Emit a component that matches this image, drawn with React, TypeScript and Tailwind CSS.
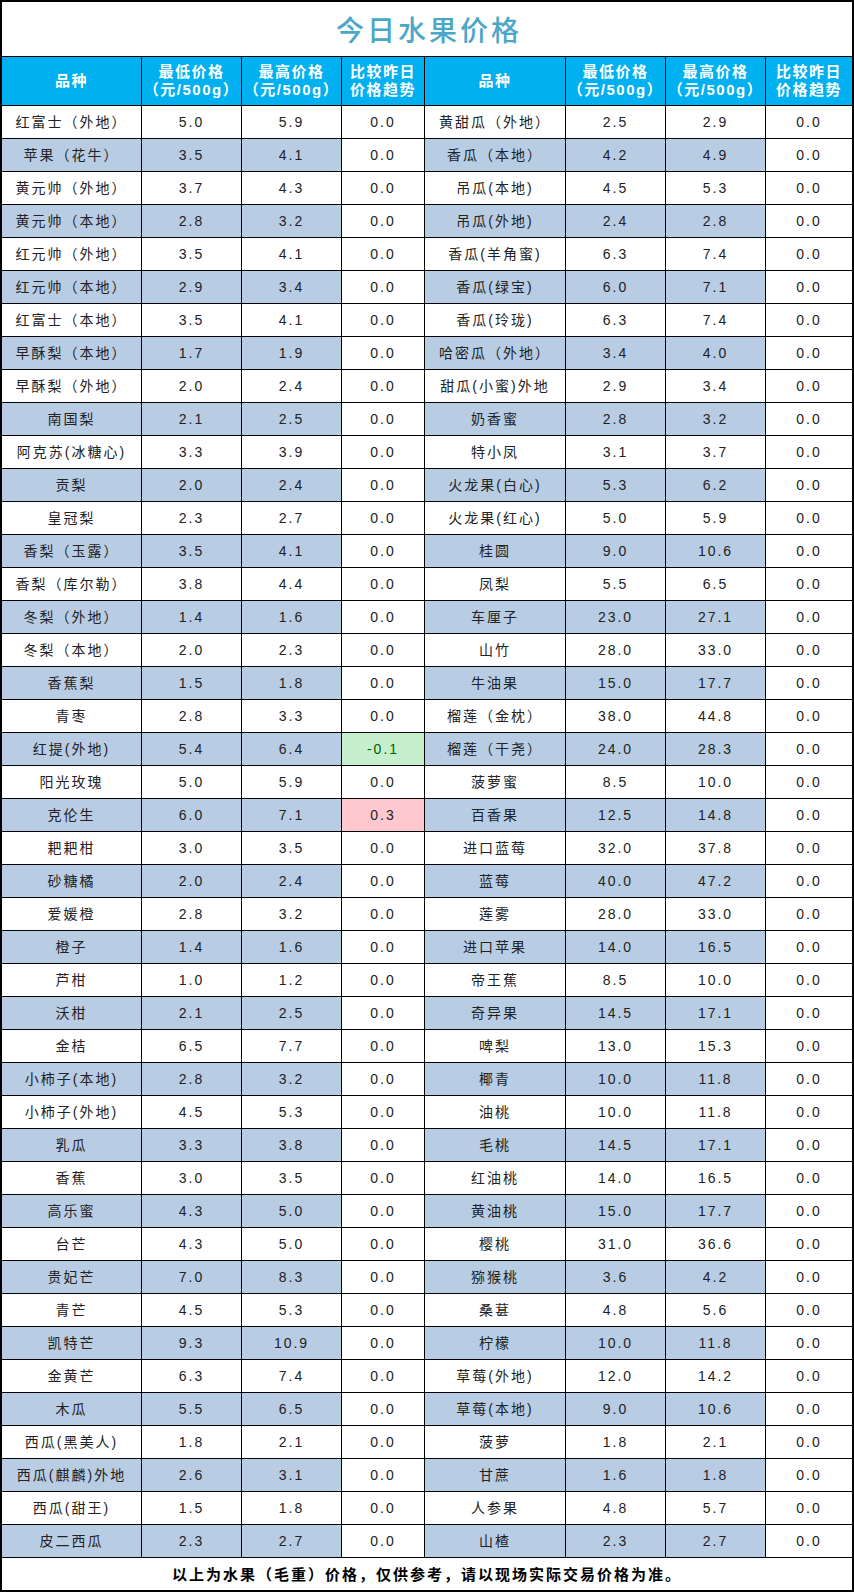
import React from "react";

type Row = [string, string, string, string];

const left: Row[] = [
  ["红富士（外地）", "5.0", "5.9", "0.0"],
  ["苹果（花牛）", "3.5", "4.1", "0.0"],
  ["黄元帅（外地）", "3.7", "4.3", "0.0"],
  ["黄元帅（本地）", "2.8", "3.2", "0.0"],
  ["红元帅（外地）", "3.5", "4.1", "0.0"],
  ["红元帅（本地）", "2.9", "3.4", "0.0"],
  ["红富士（本地）", "3.5", "4.1", "0.0"],
  ["早酥梨（本地）", "1.7", "1.9", "0.0"],
  ["早酥梨（外地）", "2.0", "2.4", "0.0"],
  ["南国梨", "2.1", "2.5", "0.0"],
  ["阿克苏(冰糖心)", "3.3", "3.9", "0.0"],
  ["贡梨", "2.0", "2.4", "0.0"],
  ["皇冠梨", "2.3", "2.7", "0.0"],
  ["香梨（玉露）", "3.5", "4.1", "0.0"],
  ["香梨（库尔勒）", "3.8", "4.4", "0.0"],
  ["冬梨（外地）", "1.4", "1.6", "0.0"],
  ["冬梨（本地）", "2.0", "2.3", "0.0"],
  ["香蕉梨", "1.5", "1.8", "0.0"],
  ["青枣", "2.8", "3.3", "0.0"],
  ["红提(外地)", "5.4", "6.4", "-0.1"],
  ["阳光玫瑰", "5.0", "5.9", "0.0"],
  ["克伦生", "6.0", "7.1", "0.3"],
  ["耙耙柑", "3.0", "3.5", "0.0"],
  ["砂糖橘", "2.0", "2.4", "0.0"],
  ["爱媛橙", "2.8", "3.2", "0.0"],
  ["橙子", "1.4", "1.6", "0.0"],
  ["芦柑", "1.0", "1.2", "0.0"],
  ["沃柑", "2.1", "2.5", "0.0"],
  ["金桔", "6.5", "7.7", "0.0"],
  ["小柿子(本地)", "2.8", "3.2", "0.0"],
  ["小柿子(外地)", "4.5", "5.3", "0.0"],
  ["乳瓜", "3.3", "3.8", "0.0"],
  ["香蕉", "3.0", "3.5", "0.0"],
  ["高乐蜜", "4.3", "5.0", "0.0"],
  ["台芒", "4.3", "5.0", "0.0"],
  ["贵妃芒", "7.0", "8.3", "0.0"],
  ["青芒", "4.5", "5.3", "0.0"],
  ["凯特芒", "9.3", "10.9", "0.0"],
  ["金黄芒", "6.3", "7.4", "0.0"],
  ["木瓜", "5.5", "6.5", "0.0"],
  ["西瓜(黑美人)", "1.8", "2.1", "0.0"],
  ["西瓜(麒麟)外地", "2.6", "3.1", "0.0"],
  ["西瓜(甜王)", "1.5", "1.8", "0.0"],
  ["皮二西瓜", "2.3", "2.7", "0.0"],
];

const right: Row[] = [
  ["黄甜瓜（外地）", "2.5", "2.9", "0.0"],
  ["香瓜（本地）", "4.2", "4.9", "0.0"],
  ["吊瓜(本地)", "4.5", "5.3", "0.0"],
  ["吊瓜(外地)", "2.4", "2.8", "0.0"],
  ["香瓜(羊角蜜)", "6.3", "7.4", "0.0"],
  ["香瓜(绿宝)", "6.0", "7.1", "0.0"],
  ["香瓜(玲珑)", "6.3", "7.4", "0.0"],
  ["哈密瓜（外地）", "3.4", "4.0", "0.0"],
  ["甜瓜(小蜜)外地", "2.9", "3.4", "0.0"],
  ["奶香蜜", "2.8", "3.2", "0.0"],
  ["特小凤", "3.1", "3.7", "0.0"],
  ["火龙果(白心)", "5.3", "6.2", "0.0"],
  ["火龙果(红心)", "5.0", "5.9", "0.0"],
  ["桂圆", "9.0", "10.6", "0.0"],
  ["凤梨", "5.5", "6.5", "0.0"],
  ["车厘子", "23.0", "27.1", "0.0"],
  ["山竹", "28.0", "33.0", "0.0"],
  ["牛油果", "15.0", "17.7", "0.0"],
  ["榴莲（金枕）", "38.0", "44.8", "0.0"],
  ["榴莲（干尧）", "24.0", "28.3", "0.0"],
  ["菠萝蜜", "8.5", "10.0", "0.0"],
  ["百香果", "12.5", "14.8", "0.0"],
  ["进口蓝莓", "32.0", "37.8", "0.0"],
  ["蓝莓", "40.0", "47.2", "0.0"],
  ["莲雾", "28.0", "33.0", "0.0"],
  ["进口苹果", "14.0", "16.5", "0.0"],
  ["帝王蕉", "8.5", "10.0", "0.0"],
  ["奇异果", "14.5", "17.1", "0.0"],
  ["啤梨", "13.0", "15.3", "0.0"],
  ["椰青", "10.0", "11.8", "0.0"],
  ["油桃", "10.0", "11.8", "0.0"],
  ["毛桃", "14.5", "17.1", "0.0"],
  ["红油桃", "14.0", "16.5", "0.0"],
  ["黄油桃", "15.0", "17.7", "0.0"],
  ["樱桃", "31.0", "36.6", "0.0"],
  ["猕猴桃", "3.6", "4.2", "0.0"],
  ["桑葚", "4.8", "5.6", "0.0"],
  ["柠檬", "10.0", "11.8", "0.0"],
  ["草莓(外地)", "12.0", "14.2", "0.0"],
  ["草莓(本地)", "9.0", "10.6", "0.0"],
  ["菠萝", "1.8", "2.1", "0.0"],
  ["甘蔗", "1.6", "1.8", "0.0"],
  ["人参果", "4.8", "5.7", "0.0"],
  ["山楂", "2.3", "2.7", "0.0"],
];

const cell =
  "flex items-center justify-center h-[32px] text-[14px] tracking-[2px] text-[#222]";

function trendClass(v: string) {
  if (v.startsWith("-")) return "bg-[#c6efce] text-[#006100]";
  if (v !== "0.0") return "bg-[#ffc7ce] text-[#9c0006]";
  return "bg-white";
}

function Header() {
  const h =
    "flex flex-col items-center justify-center h-[48px] bg-[#00b0f0] text-white font-bold text-[15px] leading-[18px] tracking-[1.5px]";
  const cells = (
    <>
      <div className={h}>品种</div>
      <div className={h}>
        <span>最低价格</span>
        <span>（元/500g）</span>
      </div>
      <div className={h}>
        <span>最高价格</span>
        <span>（元/500g）</span>
      </div>
      <div className={h}>
        <span>比较昨日</span>
        <span>价格趋势</span>
      </div>
    </>
  );
  return (
    <>
      {cells}
      {cells}
    </>
  );
}

export default function App() {
  return (
    <div
      className="w-[854px] bg-white"
      style={{ fontFamily: '"Liberation Sans", "Noto Sans CJK SC", sans-serif' }}
    >
      <div className="grid grid-cols-[139px_99px_99px_82px_140px_99px_99px_86px] gap-px bg-black border-2 border-black">
        <div className="col-span-8 h-[54px] bg-white flex items-center justify-center">
          <span
            className="text-[28px] font-medium tracking-[3px] text-[#4ba7c6] pl-[4px]"
            style={{ fontFamily: '"Noto Sans CJK SC", sans-serif' }}
          >
            今日水果价格
          </span>
        </div>
        <Header />
        {left.map((l, i) => {
          const r = right[i];
          const bg = i % 2 === 1 ? "bg-[#b8cce4]" : "bg-white";
          return (
            <React.Fragment key={i}>
              <div className={`${cell} ${bg}`}>{l[0]}</div>
              <div className={`${cell} ${bg}`}>{l[1]}</div>
              <div className={`${cell} ${bg}`}>{l[2]}</div>
              <div className={`${cell} ${trendClass(l[3])}`}>{l[3]}</div>
              <div className={`${cell} ${bg}`}>{r[0]}</div>
              <div className={`${cell} ${bg}`}>{r[1]}</div>
              <div className={`${cell} ${bg}`}>{r[2]}</div>
              <div className={`${cell} ${trendClass(r[3])}`}>{r[3]}</div>
            </React.Fragment>
          );
        })}
        <div className="col-span-8 h-[32px] bg-white flex items-center justify-center">
          <span
            className="text-[15px] font-bold tracking-[2px] text-black"
            style={{ fontFamily: '"Noto Sans CJK SC", sans-serif' }}
          >
            以上为水果（毛重）价格，仅供参考，请以现场实际交易价格为准。
          </span>
        </div>
      </div>
    </div>
  );
}
